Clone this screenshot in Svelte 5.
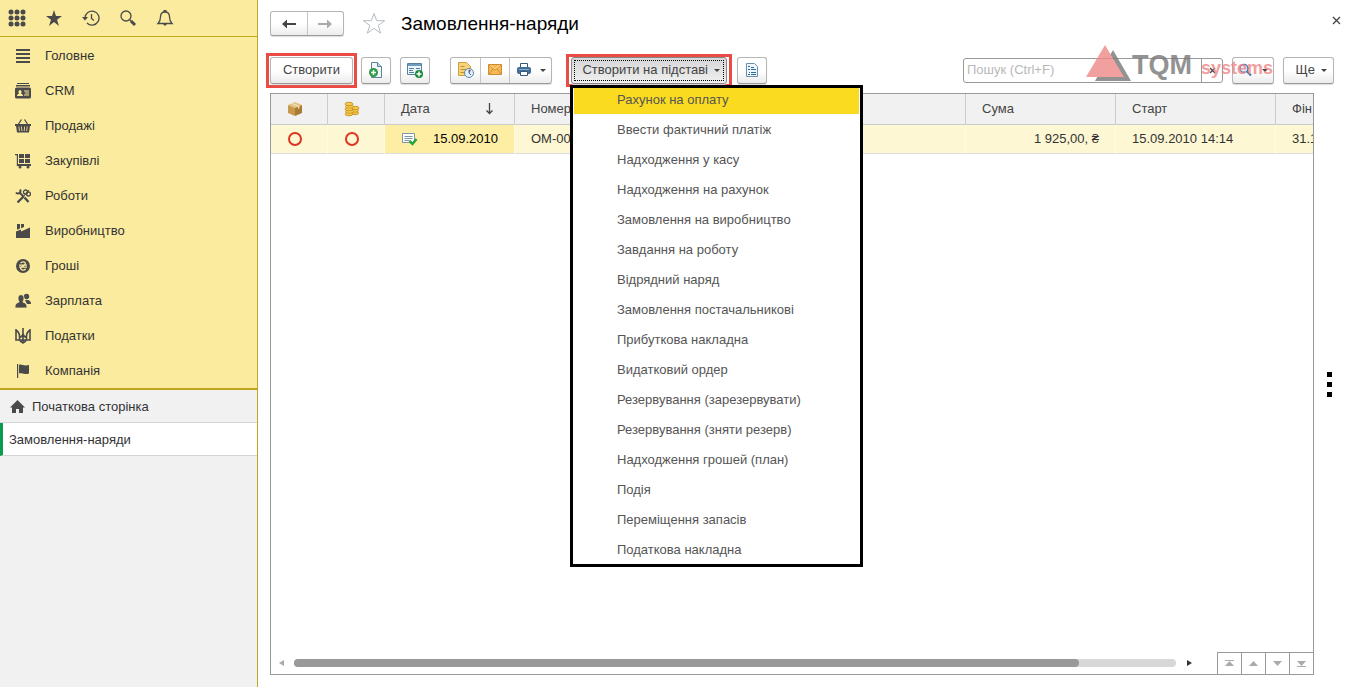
<script lang="ts">
	type Section = { label: string; icon: string };

	const sections: Section[] = [
		{
			label: 'Головне',
			icon: '<path d="M1 1h14v2H1zM1 5h14v2H1zM1 9h14v2H1zM1 13h14v2H1z"/>'
		},
		{
			label: 'CRM',
			icon: '<path d="M2 0h12v1H2zM1 2h14v1.5H1z"/><path fill-rule="evenodd" d="M1.500 4.500h13a1.500 1.500 0 0 1 1.500 1.500v8a1.500 1.500 0 0 1-1.500 1.500h-13A1.500 1.500 0 0 1 0 14V6a1.500 1.500 0 0 1 1.500-1.500zM2 13h6c0-1.500-1-2-2-2.300C7 9.500 6.700 7 5 7s-2 2.500-1 3.700c-1 .3-2 .8-2 2.300zM9 7.500v1h5v-1zM10 9.500v1h4v-1zM9 11.500v1h5v-1z"/>'
		},
		{
			label: 'Продажі',
			icon: '<path d="M0 6h16v2H0z"/><path fill="none" stroke="currentColor" stroke-width="1.300" d="M3.500 6l3-4.500M12.500 6l-3-4.500"/><path fill-rule="evenodd" d="M1 8h14l-1 6.500H2zM3.500 8.500l.5 4.500h.8l-.5-4.500zM6 8.500l.6 4.500h.8l-.6-4.500zM9.300 8.500L8.700 13h.8l.6-4.500zM11.800 8.500l-.5 4.500h.8l.5-4.500z"/>'
		},
		{
			label: 'Закупівлі',
			icon: '<path d="M0 1h3v10h13v2H1.800V2.300H0zM4 1h5v4H4zM10 1h5v4h-5zM4 6h5v4H4zM10 6h5v4h-5z"/><circle cx="5" cy="14" r="1.500"/><circle cx="13" cy="14" r="1.500"/>'
		},
		{
			label: 'Роботи',
			icon: '<path fill="none" stroke="currentColor" stroke-width="2.300" d="M2.500 14.500l6-6M9.500 9.500l4 4.500"/><path fill="none" stroke="currentColor" stroke-width="2" d="M5 1.500a2.300 2.300 0 1 1-4 3M5 5l4 4"/><circle cx="10.500" cy="4" r="2" fill="none" stroke="currentColor" stroke-width="1.300"/><circle cx="13.500" cy="6" r="2" fill="none" stroke="currentColor" stroke-width="1.300"/><path fill="none" stroke="currentColor" d="M9 8l5-6"/>'
		},
		{
			label: 'Виробництво',
			icon: '<path d="M1 15V8.500l5-2v2l9-4V15zM2 1h3v4.500L2 6.800zM6 1h3v3L6 5.200z"/>'
		},
		{
			label: 'Гроші',
			icon: '<circle cx="8" cy="8" r="7"/><path fill="none" stroke="#fbeb9e" stroke-width="1.300" d="M5.500 5.200C7 3.300 10.500 3.500 10.300 5.600 10 7.800 5.800 8 5.700 10.300c0 2.300 3.500 2.300 5 .5M4 7.200h8M4 9.200h8"/>'
		},
		{
			label: 'Зарплата',
			icon: '<circle cx="11.500" cy="3.500" r="2.700"/><path d="M10 7h3c2 .5 3 1.500 3 4h-4z"/><path stroke="#fbeb9e" stroke-width=".8" d="M3 5c0-4.500 6-4.500 6 0 0 2-.7 3-1.200 4C10.500 10 12 11 12 15H0c0-4 1.500-5 4.200-6C3.700 8 3 7 3 5z"/>'
		},
		{
			label: 'Податки',
			icon: '<path fill="none" stroke="currentColor" stroke-width="1.600" d="M8 0v15M1 1v11h14V1M1 2c3 2 3.500 4 3.500 6.500M15 2c-3 2-3.500 4-3.500 6.500M4.500 12V9c2 0 3-1 3.500-3 .5 2 1.500 3 3.500 3v3M5 12c.5 2 1.500 2 3 3 1.500-1 2.500-1 3-3"/>'
		},
		{
			label: 'Компанія',
			icon: '<path d="M2 1h1.200v14H2zM4 2c3-1.500 4 1.500 10 0v8.500c-6 1.500-7-1-10 0z"/>'
		}
	];

	const basedOn = [
		'Рахунок на оплату',
		'Ввести фактичний платіж',
		'Надходження у касу',
		'Надходження на рахунок',
		'Замовлення на виробництво',
		'Завдання на роботу',
		'Відрядний наряд',
		'Замовлення постачальникові',
		'Прибуткова накладна',
		'Видатковий ордер',
		'Резервування (зарезервувати)',
		'Резервування (зняти резерв)',
		'Надходження грошей (план)',
		'Подія',
		'Переміщення запасів',
		'Податкова накладна'
	];

	const pager = [
		{ label: 'На початок', path: 'M2 2h9v1H2zM6.500 3l4.500 5H2z' },
		{ label: 'Вгору', path: 'M6.500 3l4.500 5H2z' },
		{ label: 'Вниз', path: 'M6.500 8L2 3h9z' },
		{ label: 'У кінець', path: 'M6.500 8L2 3h9zM2 8h9v1H2z' }
	];

	let selected = $state(0);
	let isOpen = $state(true);
	let query = $state('');
</script>

<div class="app">
	<aside>
		<div class="sections">
			<div class="tools">
				<button aria-label="Меню">
					<svg width="18" height="18" viewBox="0 0 18 18">
						{#each [3, 9, 15] as y}
							{#each [3, 9, 15] as x}
								<circle cx={x} cy={y} r="2.500" />
							{/each}
						{/each}
					</svg>
				</button>
				<button aria-label="Обране">
					<svg width="18" height="18" viewBox="0 0 18 18">
						<path d="M9 1l2 6h6l-5 3.700 2 6.300-5-4-5 4 2-6.300L1 7h6z" />
					</svg>
				</button>
				<button aria-label="Історія">
					<svg width="18" height="18" viewBox="0 0 18 18" class="line">
						<path d="M3 9a7 7 0 1 1 2 5M9.500 5v4.500l2.500 2" />
						<path class="solid" d="M0 8h6L3 11.500z" />
					</svg>
				</button>
				<button aria-label="Пошук">
					<svg width="18" height="18" viewBox="0 0 18 18" class="line">
						<circle cx="7" cy="7" r="5" />
						<path d="M10.500 10.500l2 2" />
						<path class="thick" d="M12 12l4 4" />
					</svg>
				</button>
				<button aria-label="Сповіщення">
					<svg width="18" height="18" viewBox="0 0 18 18" class="line">
						<path d="M2 14.500c2-2 2.500-3 2.500-6.500S6.500 3 9 3s4.500 1.500 4.500 5 .5 4.500 2.500 6.500z" />
						<path class="solid" d="M7.500 1h3v2h-3zM7 15h4l-2 2z" />
					</svg>
				</button>
			</div>
			<nav>
				{#each sections as section}
					<a href="#section">
						<svg width="16" height="16" viewBox="0 0 16 16">{@html section.icon}</svg>
						{section.label}
					</a>
				{/each}
			</nav>
		</div>
		<a class="tab" href="#home">
			<svg width="15" height="14" viewBox="0 0 15 14">
				<path d="M7.500 0L15 7.500h-2V13H9V9H6v4H2V7.500H0z" />
			</svg>
			Початкова сторінка
		</a>
		<a class="tab active" href="#orders">Замовлення-наряди</a>
	</aside>

	<main>
		<header>
			<div class="group history">
				<button aria-label="Назад">
					<svg width="16" height="12" viewBox="0 0 16 12">
						<path d="M1 6l5-4.500V5h9v2H6v3.500z" />
					</svg>
				</button>
				<button aria-label="Вперед" class="muted">
					<svg width="16" height="12" viewBox="0 0 16 12">
						<path d="M15 6l-5-4.500V5H1v2h9v3.500z" />
					</svg>
				</button>
			</div>
			<button class="plain" aria-label="Додати в обране">
				<svg width="24" height="23" viewBox="0 0 24 23">
					<path
						fill="#fff"
						stroke="#b4bcc4"
						d="M12 1.500l2.700 7.200h8l-6.500 4.700 2.500 7.800L12 16.400l-6.700 4.800 2.500-7.800-6.500-4.700h8z"
					/>
				</svg>
			</button>
			<h1>Замовлення-наряди</h1>
			<button class="plain close" aria-label="Закрити">
				<svg width="9" height="9" viewBox="0 0 9 9" class="line"><path d="M1 1l7 7M8 1L1 8" /></svg>
			</button>
		</header>

		<div class="toolbar">
			<div class="mark create"><button class="btn">Створити</button></div>
			<button class="btn icon" aria-label="Створити копіюванням">
				<svg width="18" height="18" viewBox="0 0 18 18">
					<path fill="#f2f8fb" stroke="#5f8296" d="M4.500 1.500h6l4 4v11h-10z" />
					<path fill="#c3d7e2" stroke="#5f8296" d="M10.500 1.500v4h4" />
					<circle cx="6.500" cy="11.500" r="4.500" fill="#2d9b46" />
					<path stroke="#fff" stroke-width="1.500" d="M4 11.500h5M6.500 9v5" />
				</svg>
			</button>
			<button class="btn icon report" aria-label="Створити за шаблоном">
				<svg width="18" height="18" viewBox="0 0 18 18">
					<path fill="#eef5fa" stroke="#55809e" d="M1.500 2.500h14v11h-14z" />
					<path fill="#6f9dba" d="M2 3h13v2H2z" />
					<path stroke="#55809e" d="M3 7.500h5M3 9.500h4M3 11.500h5M10 7.500h4" />
					<circle cx="13" cy="13" r="4" fill="#15883a" />
					<path stroke="#fff" stroke-width="1.500" d="M10.500 13h5M13 10.500v5" />
				</svg>
			</button>
			<div class="group send">
				<button aria-label="Нагадування">
					<svg width="18" height="18" viewBox="0 0 18 18">
						<path fill="#f7d47b" stroke="#cfa13d" d="M1.500 1.500h8l4 4v9h-12z" />
						<path stroke="#c08e2c" d="M3.500 5.500h4M3.500 8.500h6M3.500 11.500h5" />
						<circle cx="12" cy="12" r="4.500" fill="#e5f0fa" stroke="#5689b4" />
						<path fill="#d9483b" d="M12 12V8.500a3.500 3.500 0 0 1 2 1z" />
						<path fill="none" stroke="#336c9c" d="M12 9v3l2 2" />
					</svg>
				</button>
				<button aria-label="Надіслати">
					<svg width="16" height="14" viewBox="0 0 16 14">
						<path fill="#f6b955" stroke="#cf8c2c" d="M1.500 1.500h13v10h-13z" />
						<path fill="none" stroke="#cf8c2c" d="M2 2l6 5 6-5M2 11l4-5M14 11l-4-5" />
						<path fill="none" stroke="#fce0a0" d="M3 2l5 4 5-4" />
					</svg>
				</button>
				<button class="print" aria-label="Друк">
					<svg width="16" height="16" viewBox="0 0 16 16">
						<path fill="#fff" stroke="#35597b" d="M4.500 1.500h7v4h-7z" />
						<rect x="1" y="5" width="14" height="7" rx="2" fill="#416e98" />
						<path stroke="#88abc9" d="M3 7.500h10" />
						<path fill="#fff" stroke="#35597b" d="M4.500 9.500h7v4h-7z" />
					</svg>
					<span class="caret"></span>
				</button>
			</div>
			<div class="mark based">
				<button class="btn pressed" aria-expanded={isOpen} onclick={() => (isOpen = !isOpen)}>
					Створити на підставі <span class="caret"></span>
				</button>
				{#if isOpen}
					<ul class="menu">
						{#each basedOn as item, i}
							<li>
								<button class:selected={i === selected} onmouseenter={() => (selected = i)}>
									{item}
								</button>
							</li>
						{/each}
					</ul>
				{/if}
			</div>
			<button class="btn icon" aria-label="Реєстр">
				<svg width="16" height="16" viewBox="0 0 16 16">
					<path fill="#eef6fb" stroke="#6790ac" d="M2.500 1.500h8l3 3v10h-11z" />
					<path stroke="#2f678f" d="M4 4.500h2M4 7.500h2M7 7.500h5M5 10.500h1M7 10.500h5M4 12.500h2M7 12.500h5M7 5.500h3" />
				</svg>
			</button>

			<div class="search">
				<input type="text" aria-label="Пошук" placeholder="Пошук (Ctrl+F)" bind:value={query} />
				<button aria-label="Очистити" onclick={() => (query = '')}>
					<svg width="7" height="7" viewBox="0 0 7 7" class="line"><path d="M1 1l5 5M6 1L1 6" /></svg>
				</button>
				<div class="watermark">
					<svg width="46" height="38" viewBox="0 0 46 38">
						<path fill="#777" d="M27 5l18 31H9z" />
						<path fill="#e88" d="M19 0l19 32H0z" />
					</svg>
					<strong>TQM</strong>
					<b>systems</b>
				</div>
			</div>
			<button class="btn find" aria-label="Розширений пошук">
				<svg width="14" height="14" viewBox="0 0 14 14">
					<circle cx="6" cy="5.500" r="4" fill="#e2effa" stroke="#3a78ad" stroke-width="1.500" />
					<path stroke="#3a78ad" stroke-width="2" d="M9 8.500l4 4" />
				</svg>
				<span class="caret"></span>
			</button>
			<button class="btn more">Ще <span class="caret"></span></button>
		</div>

		<div class="content">
			<div class="list">
				<div class="rows">
					<table>
						<colgroup>
							<col class="flag" />
							<col class="flag" />
							<col class="date" />
							<col />
							<col class="sum" />
							<col class="start" />
							<col class="end" />
						</colgroup>
						<thead>
							<tr>
								<th class="mid" aria-label="Відвантаження">
									<svg width="16" height="16" viewBox="0 0 16 16">
										<path fill="#e3c183" d="M8 1l7 3-7 3-7-3z" />
										<path fill="#c7994d" d="M1 4l7 3v8l-7-3z" />
										<path fill="#a97c34" d="M15 4L8 7v8l7-3z" />
										<path fill="#f2deb2" d="M4 2.700l7 3V8l1.500-.7V5L5.500 2z" />
									</svg>
								</th>
								<th class="mid" aria-label="Оплата">
									<svg width="16" height="16" viewBox="0 0 16 16">
										<g fill="#f5ca4c" stroke="#c08c1c" stroke-width=".8">
											<ellipse cx="11" cy="12" rx="3.500" ry="1.700" />
											<ellipse cx="11" cy="9.500" rx="3.500" ry="1.700" />
											<ellipse cx="11.500" cy="7" rx="3.500" ry="1.700" />
											<ellipse cx="5" cy="13" rx="4" ry="1.800" />
											<ellipse cx="5.500" cy="10.500" rx="4" ry="1.800" />
											<ellipse cx="5" cy="8" rx="4" ry="1.800" />
											<ellipse cx="5.500" cy="5.500" rx="4" ry="1.800" />
											<ellipse cx="5" cy="3" rx="4" ry="1.800" />
										</g>
									</svg>
								</th>
								<th>
									<span class="sorted">
										Дата
										<svg width="9" height="12" viewBox="0 0 9 12" class="line">
											<path d="M4.500 0v10M1.500 7.500l3 3 3-3" />
										</svg>
									</span>
								</th>
								<th>Номер</th>
								<th>Сума</th>
								<th>Старт</th>
								<th>Фін</th>
							</tr>
						</thead>
						<tbody>
							<tr>
								<td class="mid"><span class="ring"></span></td>
								<td class="mid"><span class="ring"></span></td>
								<td class="current">
									<span class="posted">
										<svg width="17" height="16" viewBox="0 0 17 16">
											<path fill="#fff" stroke="#8095a5" d="M1.500 2.500h12v9h-12z" />
											<path stroke="#8095a5" d="M3.500 5.500h8M3.500 7.500h8M3.500 9.500h5" />
											<path fill="none" stroke="#27a53c" stroke-width="2.500" d="M8.500 10l3 3 4-5" />
										</svg>
										15.09.2010
									</span>
								</td>
								<td>ОМ-00</td>
								<td class="num">1 925,00, ₴</td>
								<td>15.09.2010 14:14</td>
								<td>31.1</td>
							</tr>
						</tbody>
					</table>
				</div>
				<div class="bottom">
					<svg width="5" height="8" viewBox="0 0 5 8"><path fill="#aaa" d="M5 1v6L0 4z" /></svg>
					<div class="track"><div class="thumb"></div></div>
					<svg width="5" height="8" viewBox="0 0 5 8"><path d="M0 1v6l5-3z" /></svg>
					<div class="pager">
						{#each pager as step}
							<button aria-label={step.label}>
								<svg width="13" height="11" viewBox="0 0 13 11"><path d={step.path} /></svg>
							</button>
						{/each}
					</div>
				</div>
			</div>
			<div class="dots"><i></i><i></i><i></i></div>
		</div>
	</main>
</div>

<style>
	:global(body) {
		background-color: white;
	}
	.app {
		display: flex;
		min-height: 100vh;
		font-family: 'Liberation Sans', Arial, sans-serif;
		font-size: 13px;
		line-height: 16px;
		color: #333;
	}
	.app :global(*) {
		box-sizing: border-box;
	}
	svg {
		display: block;
		flex: none;
		fill: currentColor;
	}
	.line {
		fill: none;
		stroke: currentColor;
		stroke-width: 1.3;
	}
	.solid {
		fill: currentColor;
		stroke: none;
	}
	.thick {
		stroke-width: 3;
	}
	button {
		display: flex;
		align-items: center;
		justify-content: center;
		margin: 0;
		padding: 0;
		border: 0;
		background: none;
		font: inherit;
		color: #444;
		white-space: nowrap;
	}
	a {
		color: inherit;
		text-decoration: none;
	}

	/* sidebar */
	aside {
		flex: none;
		width: 258px;
		border-right: 1px solid #bfa524;
		background-color: #f1f1f1;
	}
	.sections {
		border-bottom: 2px solid #bda51c;
		background-color: #fbeb9e;
	}
	.tools {
		display: flex;
		gap: 19px;
		height: 37px;
		padding-left: 8px;
		border-bottom: 1px solid #c5ab1d;
	}
	.sections svg {
		color: #4a4a4a;
	}
	nav {
		padding-top: 1px;
	}
	nav a {
		display: flex;
		align-items: center;
		gap: 14px;
		height: 35px;
		padding-left: 15px;
	}
	.tab {
		display: flex;
		align-items: center;
		gap: 7px;
		height: 33px;
		padding: 2px 0 0 10px;
		border-bottom: 1px solid #d5d5d5;
	}
	.tab svg {
		color: #4a4a4a;
	}
	.active {
		padding-left: 6px;
		border-left: 3px solid #0a9a50;
		background-color: white;
	}

	/* page head */
	main {
		display: flex;
		flex: 1;
		flex-direction: column;
		min-width: 0;
		padding-bottom: 12px;
	}
	header {
		display: flex;
		align-items: center;
		height: 47px;
		padding: 0 11px 0 12px;
	}
	h1 {
		margin: 0 0 0 15px;
		font-size: 19px;
		line-height: 24px;
		font-weight: normal;
		color: black;
	}
	.plain {
		margin-left: 18px;
	}
	.close {
		margin-left: auto;
		margin-bottom: 6px;
	}
	.btn,
	.group {
		height: 27px;
		border: 1px solid #b5b5b5;
		border-bottom-color: #999;
		border-radius: 3px;
		background: linear-gradient(#fff 50%, #ececec);
		box-shadow: 0 1px 1px #ddd;
	}
	.group {
		display: flex;
	}
	.group button {
		flex: 1;
	}
	.group button + button {
		border-left: 1px solid #c4c4c4;
	}
	.history {
		width: 74px;
		height: 25px;
	}
	.history .muted {
		color: #aaa;
	}
	.caret {
		border: 3px solid transparent;
		border-top-color: #444;
		border-bottom: 0;
	}

	/* commands */
	.toolbar {
		display: flex;
		align-items: center;
		height: 46px;
		padding: 0 18px 0 8px;
	}
	.mark {
		position: relative;
		border: 3px solid #ea4b45;
	}
	.mark .btn {
		width: 100%;
	}
	.create {
		width: 91px;
		margin-right: 4px;
		padding: 1px;
	}
	.based {
		width: 166px;
		margin: 0 5px 0 14px;
		padding: 0 2px;
	}
	.based .btn {
		gap: 6px;
		justify-content: flex-end;
		padding-right: 6px;
	}
	.btn.pressed {
		border-color: #888;
		background: linear-gradient(#d6d6d6, #f0f0f0);
		outline: 1px dotted black;
		outline-offset: -4px;
	}
	.icon {
		width: 30px;
	}
	.report {
		margin: 0 20px 0 9px;
	}
	.send {
		width: 102px;
	}
	.send button {
		flex: 0 0 29px;
	}
	.send .print {
		flex: 1;
		gap: 8px;
	}
	.search {
		position: relative;
		display: flex;
		width: 260px;
		height: 25px;
		margin-left: auto;
		border: 1px solid #999;
		border-radius: 3px;
	}
	.search input {
		flex: 1;
		min-width: 0;
		padding: 0 3px;
		border: 0;
		background: none;
		outline: none;
		font: inherit;
		color: #333;
	}
	.search input::placeholder {
		color: #b8b8b8;
	}
	.search button {
		width: 21px;
		border-left: 1px solid #999;
	}
	.find {
		gap: 10px;
		width: 42px;
		margin: 0 9px;
	}
	.more {
		gap: 6px;
		justify-content: flex-end;
		width: 51px;
		padding-right: 6px;
	}
	.watermark {
		position: absolute;
		top: -14px;
		left: 122px;
		z-index: 1;
		display: flex;
		align-items: baseline;
		opacity: 0.8;
		pointer-events: none;
	}
	.watermark svg {
		align-self: flex-start;
	}
	.watermark strong {
		font-size: 27px;
		line-height: 40px;
		color: #777;
	}
	.watermark b {
		margin-left: 9px;
		font-size: 18px;
		color: #e88;
	}

	/* drop-down */
	.menu {
		position: absolute;
		top: 28px;
		left: 1px;
		z-index: 2;
		width: 293px;
		margin: 0;
		padding: 0 1px;
		border: 3px solid black;
		background-color: white;
		list-style: none;
	}
	.menu button {
		justify-content: flex-start;
		width: 100%;
		height: 26px;
		margin-bottom: 4px;
		padding: 0 0 2px 43px;
		color: #555;
	}
	.menu li:last-child button {
		margin-bottom: 0;
	}
	.menu .selected {
		background-color: #fbdb20;
	}

	/* orders list */
	.content {
		display: flex;
		flex: 1;
		padding-left: 12px;
	}
	.list {
		display: flex;
		flex: 1;
		flex-direction: column;
		min-width: 0;
		border: 1px solid #999;
	}
	.rows {
		flex: 1;
		overflow: hidden;
	}
	table {
		width: 100%;
		border-collapse: separate;
		border-spacing: 0;
		table-layout: fixed;
	}
	.flag {
		width: 57px;
	}
	.date {
		width: 130px;
	}
	.sum {
		width: 150px;
	}
	.start {
		width: 160px;
	}
	.end {
		width: 37px;
	}
	th,
	td {
		overflow: hidden;
		padding: 0 16px;
		text-align: left;
		font-weight: normal;
		white-space: nowrap;
	}
	th {
		height: 31px;
		border-right: 1px solid #ccc;
		border-bottom: 1px solid #ccc;
		background-color: #f1f1f1;
		color: #444;
	}
	td {
		height: 29px;
		border-right: 1px solid #fffbe6;
		border-bottom: 1px solid #ddd;
		background-color: #fef7d3;
	}
	th:last-child,
	td:last-child {
		padding-right: 0;
		border-right: 0;
	}
	.mid {
		padding: 0 8px 0 0;
	}
	.mid svg,
	.ring {
		display: block;
		margin: 0 auto;
	}
	.ring {
		width: 14px;
		height: 14px;
		border: 2px solid #dc3520;
		border-radius: 50%;
	}
	.sorted,
	.posted {
		display: flex;
		align-items: center;
		justify-content: space-between;
	}
	.sorted {
		padding-right: 4px;
	}
	.current {
		background-color: #fdeea3;
		color: black;
	}
	.num {
		text-align: right;
	}
	.bottom {
		display: flex;
		align-items: center;
		height: 22px;
		padding-left: 8px;
	}
	.track {
		flex: 1;
		height: 8px;
		margin: 0 11px 0 10px;
		border-radius: 4px;
		background-color: #d8d8d8;
	}
	.thumb {
		width: 89%;
		height: 8px;
		border-radius: 4px;
		background-color: #999;
	}
	.pager {
		display: flex;
		margin-left: 25px;
		border-top: 1px solid #999;
	}
	.pager button {
		width: 24px;
		height: 21px;
		border-left: 1px solid #999;
		color: #aaa;
	}
	.dots {
		display: flex;
		flex: none;
		flex-direction: column;
		justify-content: center;
		gap: 5px;
		width: 38px;
		padding-left: 13px;
	}
	.dots i {
		width: 5px;
		height: 5px;
		background-color: black;
	}
</style>
